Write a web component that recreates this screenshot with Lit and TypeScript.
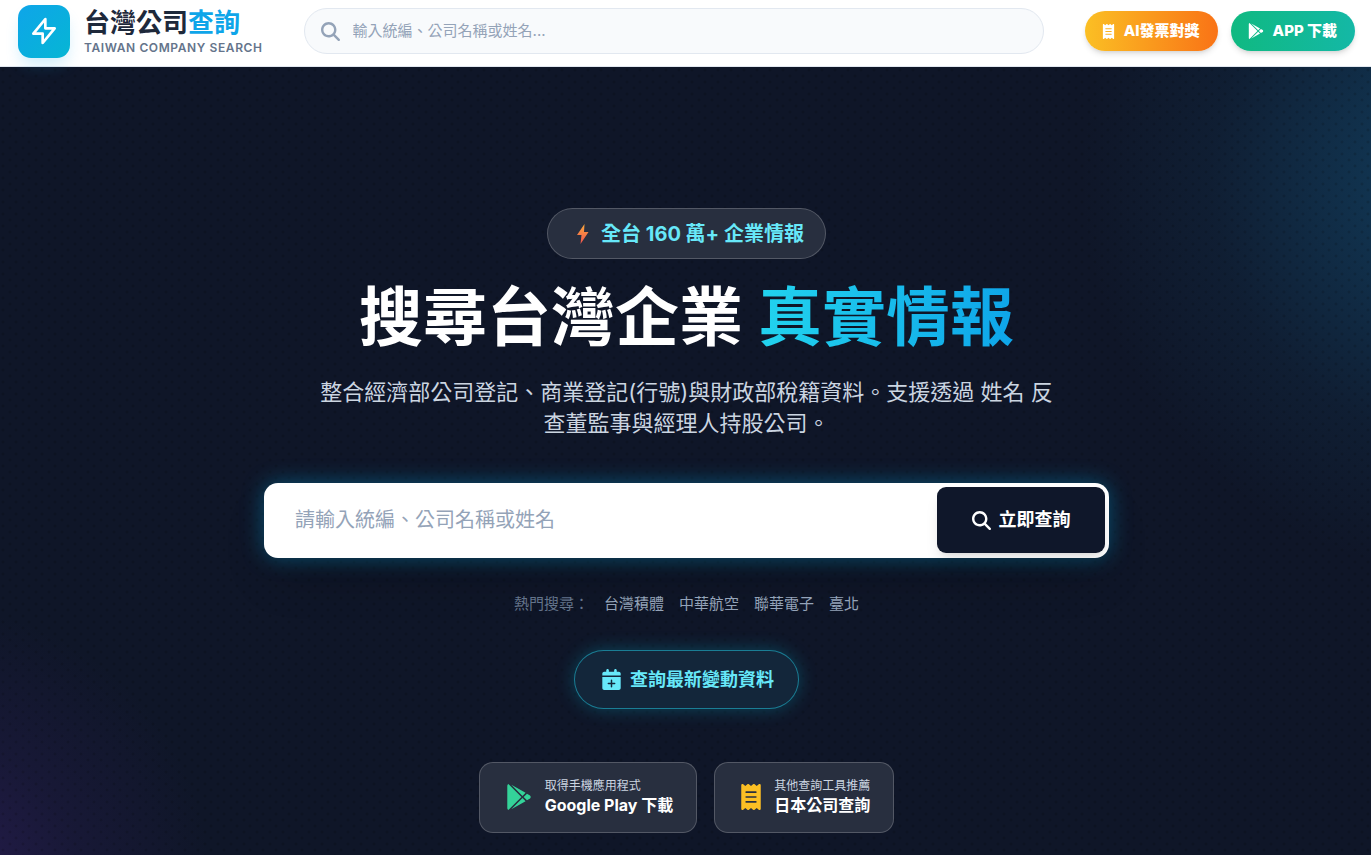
import { LitElement, html, css, svg } from "lit";
import { customElement } from "lit/decorators.js";

const searchPath = svg`<path d="M416 208c0 45.900-14.900 88.300-40 122.700L502.600 457.400c12.500 12.500 12.500 32.800 0 45.300s-32.800 12.500-45.300 0L330.700 376c-34.400 25.200-76.800 40-122.700 40C93.100 416 0 322.900 0 208S93.100 0 208 0S416 93.100 416 208zM208 352a144 144 0 1 0 0-288 144 144 0 1 0 0 288z"/>`;
const playPath = svg`<path d="M325.300 234.300L104.600 13l280.800 161.200-60.100 60.100zM47 0C34 6.800 25.300 19.200 25.300 35.300v441.300c0 16.100 8.700 28.500 21.700 35.300l256.600-256L47 0zm425.200 225.600l-58.900-34.100-65.700 64.500 65.700 64.500 60.100-34.100c18-14.300 18-46.500-1.200-60.800zM104.600 499l280.800-161.200-60.100-60.100L104.600 499z"/>`;
const receiptPath = svg`<path d="M14 2.200C22.500-1.700 32.500-.3 39.600 5.800L80 40.400 120.400 5.800c9-7.700 22.300-7.700 31.200 0L192 40.400 232.400 5.800c9-7.700 22.200-7.700 31.200 0L304 40.400 344.400 5.800c7.100-6.100 17.100-7.500 25.600-3.600s14 12.400 14 21.800v464c0 9.400-5.500 17.900-14 21.800s-18.500 2.500-25.600-3.600L304 471.600l-40.400 34.600c-9 7.700-22.200 7.700-31.200 0L192 471.600l-40.400 34.600c-9 7.700-22.300 7.700-31.200 0L80 471.600 39.600 506.200c-7.100 6.100-17.100 7.500-25.600 3.600S0 497.400 0 488V24C0 14.600 5.500 6.100 14 2.200zM96 144c-8.800 0-16 7.200-16 16s7.200 16 16 16h192c8.800 0 16-7.200 16-16s-7.200-16-16-16H96zM80 352c0 8.800 7.200 16 16 16h192c8.800 0 16-7.200 16-16s-7.200-16-16-16H96c-8.800 0-16 7.200-16 16zM96 240c-8.800 0-16 7.200-16 16s7.200 16 16 16h192c8.800 0 16-7.200 16-16s-7.200-16-16-16H96z"/>`;
const calendarPath = svg`<path d="M96 32v32H48C21.500 64 0 85.500 0 112v48h448v-48c0-26.500-21.500-48-48-48h-48V32c0-17.700-14.300-32-32-32s-32 14.300-32 32v32H160V32c0-17.700-14.300-32-32-32S96 14.300 96 32zM448 192H0v272c0 26.500 21.500 48 48 48h352c26.500 0 48-21.500 48-48V192zM224 256c11 0 18 8 18 18v60h60c10 0 18 8 18 18s-8 18-18 18h-60v60c0 10-7 18-18 18s-18-8-18-18v-60h-60c-10 0-18-8-18-18s8-18 18-18h60v-60c0-10 7-18 18-18z"/>`;

const hotKeywords = ["台灣積體", "中華航空", "聯華電子", "臺北"];

@customElement("app-root")
export class AppRoot extends LitElement {
  static styles = css`
    :host {
      display: flex;
      flex-direction: column;
      min-height: 100vh;
      background: #0f172a;
      color: #fff;
      font-family: Inter, "Noto Sans CJK TC", sans-serif;
      font-size: 16px;
    }
    * { box-sizing: border-box; }
    a { color: inherit; text-decoration: none; }
    button, input { font-family: inherit; border: 0; margin: 0; }
    svg { display: block; flex: none; fill: currentColor; }
    .label { padding-bottom: 4px; }

    .header {
      display: flex;
      align-items: center;
      height: 67px;
      padding: 0 16px 4px 18px;
      background: #fff;
      border-bottom: 1px solid #e2e8f0;
      color: #1e293b;
    }
    .brand { display: flex; align-items: center; gap: 14px; }
    .logo {
      display: grid;
      place-items: center;
      width: 52px;
      height: 53px;
      border-radius: 13px;
      background: linear-gradient(135deg, #0ea5e9, #06b6d4);
      box-shadow: 0 10px 16px -3px rgba(14, 165, 233, 0.2);
      color: #fff;
      position: relative;
      z-index: 1;
    }
    .logo svg { fill: none; stroke: currentColor; }
    .names { display: flex; flex-direction: column; padding-top: 2px; }
    .name { font-size: 26px; line-height: 32px; font-weight: 700; white-space: nowrap; }
    .name em {
      font-style: normal;
      color: #0ea5e9;
    }
    .tagline {
      font-size: 12px;
      line-height: 18px;
      font-weight: 600;
      letter-spacing: 0.05em;
      color: #64748b;
      white-space: nowrap;
    }
    .quick {
      display: flex;
      align-items: center;
      flex: 1;
      gap: 13px;
      height: 46px;
      margin: 0 41px;
      padding: 0 16px;
      border: 1px solid #e2e8f0;
      border-radius: 23px;
      background: #f8fafc;
      color: #94a3b8;
    }
    .quick input {
      flex: 1;
      min-width: 0;
      padding: 0;
      background: none;
      outline: none;
      font-size: 15px;
      line-height: 22px;
      color: #1e293b;
    }
    input::placeholder { color: #94a3b8; opacity: 1; }
    .actions { display: flex; gap: 13px; }
    .pill {
      display: flex;
      align-items: center;
      height: 40px;
      gap: 9px;
      padding: 0 18px 0 17px;
      border-radius: 20px;
      color: #fff;
      font-size: 15px;
      font-weight: 800;
      white-space: nowrap;
      box-shadow: 0 4px 6px -1px rgba(0, 0, 0, 0.12), 0 2px 4px -2px rgba(0, 0, 0, 0.12);
    }
    .invoice { background: linear-gradient(90deg, #fbbf24, #f97316); }
    .app { background: linear-gradient(90deg, #10b981, #14b8a6); }

    .hero {
      flex: 1;
      display: flex;
      flex-direction: column;
      align-items: center;
      padding: 141px 24px 22px 26px;
      background:
        radial-gradient(circle at 3px 3px, rgba(0, 0, 0, 0.22) 0, rgba(0, 0, 0, 0) 2px) 0 0 / 13px 12px,
        radial-gradient(circle at 10px 9px, rgba(0, 0, 0, 0.22) 0, rgba(0, 0, 0, 0) 2px) 0 0 / 13px 12px,
        radial-gradient(circle at 108% 14%, rgba(20, 100, 145, 0.55), rgba(20, 100, 145, 0.3) 150px, rgba(20, 100, 145, 0.1) 270px, rgba(20, 100, 145, 0) 400px),
        radial-gradient(circle at -5% 104%, rgba(76, 38, 140, 0.4), rgba(76, 38, 140, 0.14) 150px, rgba(76, 38, 140, 0) 280px),
        #0f1628;
      text-align: center;
    }
    .badge {
      display: flex;
      align-items: center;
      gap: 10px;
      height: 51px;
      padding: 0 21px 0 27px;
      border: 1px solid rgba(255, 255, 255, 0.2);
      border-radius: 26px;
      background: #282f3f;
      color: #67e8f9;
      font-size: 20px;
      font-weight: 700;
    }
    .badge .label { padding-bottom: 2px; }
    .title { margin: 18px 0 0; font-size: 64px; line-height: 80px; font-weight: 700; }
    .title span {
      background: linear-gradient(90deg, #22d3ee, #0ea5e9);
      -webkit-background-clip: text;
      background-clip: text;
      color: transparent;
    }
    .lead {
      max-width: 740px;
      margin: 20px 0 0;
      font-size: 22px;
      line-height: 31px;
      color: #cbd5e1;
    }
    .search {
      display: flex;
      width: 100%;
      max-width: 845px;
      height: 75px;
      margin-top: 44px;
      padding: 4px 4px 5px;
      border-radius: 14px;
      background: #fff;
      box-shadow: 0 0 22px rgba(6, 160, 212, 0.45), 0 24px 48px -12px rgba(0, 0, 0, 0.3);
    }
    .search input {
      flex: 1;
      min-width: 0;
      padding: 0 27px;
      background: none;
      outline: none;
      font-size: 20px;
      color: #1e293b;
    }
    .submit {
      display: flex;
      align-items: center;
      justify-content: center;
      gap: 8px;
      width: 168px;
      border-radius: 9px;
      background: #0f172a;
      color: #fff;
      font-size: 18px;
      font-weight: 700;
      box-shadow: 0 10px 15px -3px rgba(0, 0, 0, 0.1), 0 4px 6px -4px rgba(0, 0, 0, 0.1);
    }
    .hot {
      display: flex;
      gap: 15px;
      margin-top: 34px;
      font-size: 15px;
      line-height: 23px;
      color: #94a3b8;
    }
    .hot span { color: #64748b; }
    .latest {
      display: flex;
      align-items: center;
      gap: 9px;
      height: 59px;
      margin-top: 35px;
      padding: 0 24px 0 27px;
      border: 1px solid rgba(34, 211, 238, 0.5);
      border-radius: 30px;
      background: #13263a;
      color: #67e8f9;
      font-size: 18px;
      font-weight: 700;
      box-shadow: 0 0 18px rgba(6, 182, 212, 0.3);
    }
    .cards { display: flex; gap: 17px; margin-top: 53px; }
    .card {
      display: flex;
      align-items: center;
      gap: 13px;
      height: 71px;
      padding: 0 23px 2px 26px;
      border: 1px solid rgba(255, 255, 255, 0.2);
      border-radius: 14px;
      background: #282f3f;
      text-align: left;
    }
    .card small { display: block; font-size: 12px; line-height: 17px; color: #cbd5e1; }
    .card strong { display: block; font-size: 16px; line-height: 22px; font-weight: 700; }
    .green { color: #34d399; }
    .amber { color: #fbbf24; }
  `;

  render() {
    return html`
      <header class="header">
        <a class="brand" href="#">
          <span class="logo">
            <svg width="32" height="32" viewBox="0 0 24 24" stroke-width="2" stroke-linecap="round" stroke-linejoin="round"><path d="M13 10V3L4 14h7v7l9-11h-7z" /></svg>
          </span>
          <span class="names">
            <span class="name">台灣公司<em>查詢</em></span>
            <span class="tagline">TAIWAN COMPANY SEARCH</span>
          </span>
        </a>
        <label class="quick">
          <svg width="19" height="19" viewBox="0 0 512 512">${searchPath}</svg>
          <input type="text" aria-label="搜尋" placeholder="輸入統編、公司名稱或姓名..." />
        </label>
        <nav class="actions">
          <a class="pill invoice" href="#"><svg width="13" height="15" viewBox="0 0 384 512">${receiptPath}</svg><span class="label">AI發票對獎</span></a>
          <a class="pill app" href="#"><svg width="16" height="16" viewBox="0 0 512 512">${playPath}</svg><span class="label">APP 下載</span></a>
        </nav>
      </header>
      <main class="hero">
        <div class="badge">
          <svg width="16" height="22" viewBox="0 0 16 22">
            <defs>
              <linearGradient id="bolt" x1="0" y1="0" x2="0" y2="1">
                <stop offset="0" stop-color="#fbab3c" />
                <stop offset="1" stop-color="#f0524f" />
              </linearGradient>
            </defs>
            <path fill="url(#bolt)" d="M9.500 1L2 12h4.500L5.500 21 13.500 9H9z" />
          </svg>
          <span class="label">全台 160 萬+ 企業情報</span>
        </div>
        <h1 class="title">搜尋台灣企業 <span>真實情報</span></h1>
        <p class="lead">整合經濟部公司登記、商業登記(行號)與財政部稅籍資料。支援透過 姓名 反查董監事與經理人持股公司。</p>
        <form class="search" @submit=${(e: Event) => e.preventDefault()}>
          <input type="text" aria-label="公司搜尋" placeholder="請輸入統編、公司名稱或姓名" />
          <button class="submit" type="submit"><svg width="19" height="19" viewBox="0 0 512 512">${searchPath}</svg><span class="label">立即查詢</span></button>
        </form>
        <div class="hot">
          <span>熱門搜尋：</span>
          ${hotKeywords.map((k) => html`<a href="#">${k}</a>`)}
        </div>
        <a class="latest" href="#"><svg width="19" height="21" viewBox="0 0 448 512">${calendarPath}</svg><span class="label">查詢最新變動資料</span></a>
        <div class="cards">
          <a class="card" href="#">
            <svg class="green" width="26" height="26" viewBox="0 0 512 512">${playPath}</svg>
            <span><small>取得手機應用程式</small><strong>Google Play 下載</strong></span>
          </a>
          <a class="card" href="#">
            <svg class="amber" width="20" height="26" viewBox="0 0 384 512">${receiptPath}</svg>
            <span><small>其他查詢工具推薦</small><strong>日本公司查詢</strong></span>
          </a>
        </div>
      </main>
    `;
  }
}
